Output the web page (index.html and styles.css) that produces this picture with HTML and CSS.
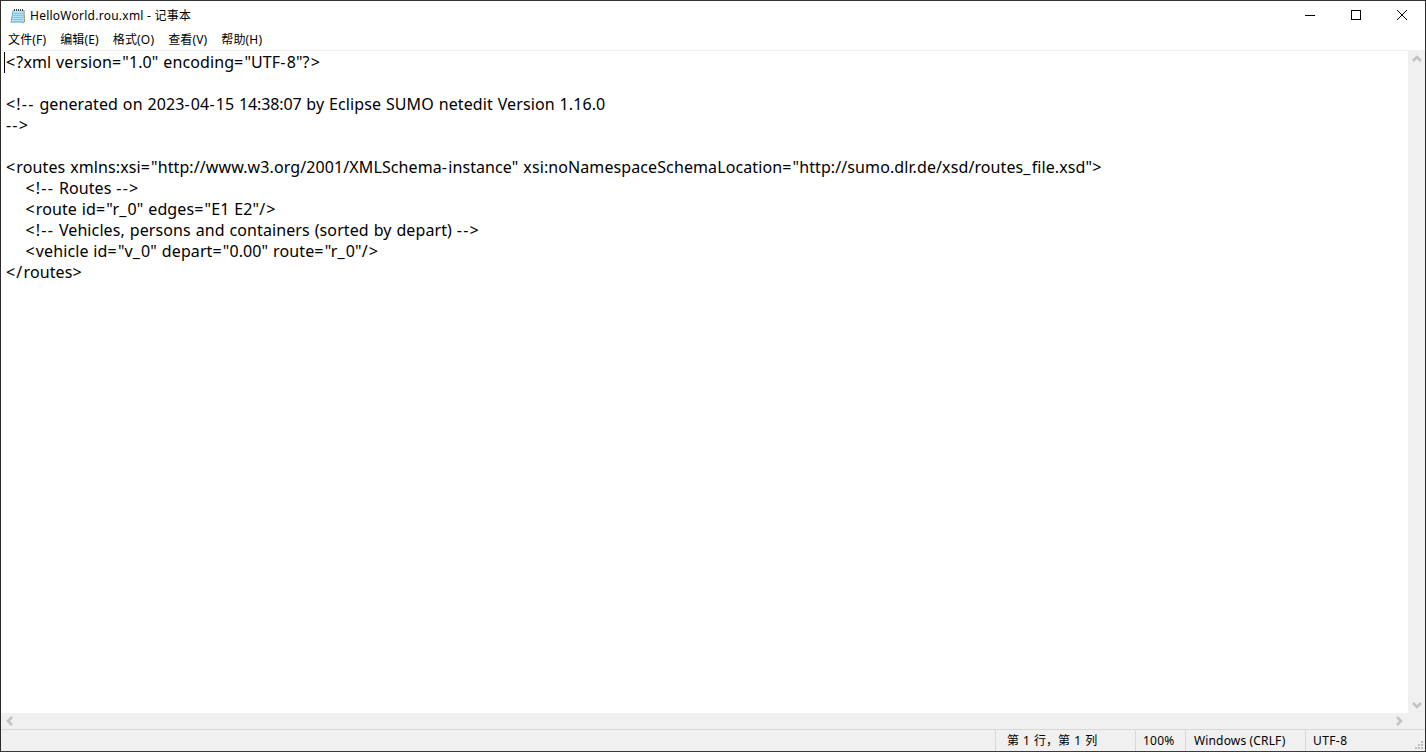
FILE: index.html
```html
<!DOCTYPE html>
<html lang="zh">
<head>
<meta charset="utf-8">
<title>HelloWorld.rou.xml - 记事本</title>
<link rel="stylesheet" href="styles.css">
</head>
<body>
<div class="window">
  <header class="titlebar">
    <svg class="app-icon" width="16" height="16" viewBox="0 0 16 16">
      <path d="M3 2 H14 L14.500 14 L12.500 15 H1 Z" fill="#9fd3ec"/>
      <path d="M3.500 2 H13.500 L13.800 14 H2 Z" fill="#b4e0f3"/>
      <path d="M14 2 L14.500 14 L12.500 15" fill="none" stroke="#a8946a"/>
      <path d="M1 15 L3 2.500" fill="none" stroke="#6fa9c8"/>
      <path d="M3.800 5.500h9M3.500 7.500h9.500M3.300 9.500h9.700M3 11.500h10M2.800 13.500h10" stroke="#86c3e0" fill="none"/>
      <path d="M4 1h1v2h-1zM6 1h1v2h-1zM8 1h1v2h-1zM10 1h1v2h-1zM12 1h1v2h-1z" fill="#3d3d3d"/>
    </svg>
    <span class="title">HelloWorld.rou.xml - 记事本</span>
    <div class="controls">
      <svg class="ctl" width="46" height="30" viewBox="0 0 46 30"><path d="M18 15.500h10" stroke="#000" fill="none"/></svg>
      <svg class="ctl" width="46" height="30" viewBox="0 0 46 30"><rect x="18.500" y="10.500" width="9" height="9" stroke="#000" fill="none"/></svg>
      <svg class="ctl" width="46" height="30" viewBox="0 0 46 30"><path d="M18 10l10 10M28 10l-10 10" stroke="#000" fill="none"/></svg>
    </div>
  </header>
  <nav class="menubar">
    <span class="menu">文件(F)</span>
    <span class="menu">编辑(E)</span>
    <span class="menu">格式(O)</span>
    <span class="menu">查看(V)</span>
    <span class="menu">帮助(H)</span>
  </nav>
  <div class="editor-row">
    <main class="editor">
      <span class="caret"></span>
<pre class="text"><b>&lt;</b>?xml version<b>=</b>"1.0" encoding<b>=</b>"UTF<b>-</b>8"<b>?&gt;</b>

<b>&lt;!--</b> generated on 2023<b>-</b>04<b>-</b>15 <s>14:38:07</s> by Eclipse SUMO netedit Version 1.16.0
<b>--&gt;</b>

<b>&lt;</b>routes xmlns:xsi<b>=</b>"http://www.w3.org/2001/XMLSchema<b>-</b>instance" xsi:noNamespaceSchemaLocation<b>=</b>"http://sumo.dlr.de/xsd/routes<b>_</b>file.xsd"<b>&gt;</b>
    <b>&lt;!--</b> Routes <b>--&gt;</b>
    <b>&lt;</b>route id<b>=</b>"r<b>_</b>0" edges<b>=</b>"E1 E2"<b>/&gt;</b>
    <b>&lt;!--</b> Vehicles, persons and containers (sorted by depart) <b>--&gt;</b>
    <b>&lt;</b>vehicle id<b>=</b>"v<b>_</b>0" depart<b>=</b>"0.00" route<b>=</b>"r<b>_</b>0"<b>/&gt;</b>
<b>&lt;/</b>routes<b>&gt;</b></pre>
    </main>
    <div class="vscroll">
      <svg width="16" height="16" viewBox="0 0 16 16"><path d="M4 10 L8 6 L12 10" class="arrow"/></svg>
      <svg width="16" height="16" viewBox="0 0 16 16"><path d="M4 6 L8 10 L12 6" class="arrow"/></svg>
    </div>
  </div>
  <div class="hscroll">
    <svg width="17" height="16" viewBox="0 0 17 16"><path d="M11 4 L7 8 L11 12" class="arrow"/></svg>
    <svg width="17" height="16" viewBox="0 0 17 16"><path d="M6 4 L10 8 L6 12" class="arrow"/></svg>
    <span class="corner"></span>
  </div>
  <footer class="statusbar">
    <span class="cell cell-pos">第 1 行，第 1 列</span>
    <span class="cell cell-zoom">100%</span>
    <span class="cell cell-eol">Windows (CRLF)</span>
    <span class="cell cell-enc">UTF-8</span>
    <svg class="grip" width="10" height="10" viewBox="0 0 10 10"><path d="M6 0h2v2h-2zM3 3h2v2h-2zM6 3h2v2h-2zM0 6h2v2h-2zM3 6h2v2h-2zM6 6h2v2h-2z" fill="#bdbdbd"/></svg>
  </footer>
</div>
</body>
</html>
```

FILE: styles.css
```css
* { box-sizing: border-box; }
html, body { margin: 0; height: 100%; overflow: hidden; }
body { font-family: "Noto Sans", "Noto Sans CJK SC", sans-serif; color: #000; background: #fff; }
.window {
  width: 1426px; height: 752px; display: flex; flex-direction: column;
  border: 1px solid #2b2b2b; border-bottom-color: #3a3a3a; border-top-color: #333;
  background: #fff;
}
.titlebar { height: 29px; flex: none; display: flex; align-items: center; padding-left: 9px; }
.app-icon { flex: none; }
.title { font-size: 12px; margin-left: 4px; line-height: 16px; letter-spacing: 0.25px; }
.controls { margin-left: auto; display: flex; margin-top: -1px; }
.ctl { display: block; }
.menubar { height: 20px; flex: none; display: flex; align-items: center; padding-left: 7px; gap: 14px; font-size: 12px; letter-spacing: 0.15px; }
.menu { line-height: 16px; }
.editor-row { flex: 1; display: flex; min-height: 0; border-top: 1px solid #f0f0f0; }
.editor { flex: 1; position: relative; padding: 1px 0 0 5px; overflow: hidden; }
.caret { position: absolute; left: 3px; top: 1px; width: 1px; height: 21px; background: #000; }
.text { margin: 0; font: 16px/21px "Noto Sans", "Noto Sans CJK SC", sans-serif; white-space: pre; letter-spacing: 0.1px; word-spacing: 0.6px; }
.text b { font-weight: 400; letter-spacing: 1.2px; }
.text s { text-decoration: none; letter-spacing: -0.15px; }
.vscroll { width: 17px; flex: none; background: #f0f0f0; display: flex; flex-direction: column; justify-content: space-between; padding-left: 1px; }
.vscroll svg, .hscroll svg { display: block; flex: none; }
.arrow { fill: none; stroke: #c2c2c2; stroke-width: 2.500; }
.hscroll { height: 17px; flex: none; background: #f0f0f0; display: flex; justify-content: space-between; border-bottom: 1px solid #d7d7d7; padding-right: 17px; position: relative; }
.corner { position: absolute; right: 0; top: 0; width: 17px; height: 16px; background: #f0f0f0; }
.statusbar { height: 21px; flex: none; background: #f0f0f0; display: flex; font-size: 12px; position: relative; padding-left: 994px; }
.cell { border-left: 1px solid #d7d7d7; display: flex; align-items: center; padding-left: 12px; line-height: 16px; white-space: pre; }
.cell-pos { width: 140px; padding-left: 11px; word-spacing: 1px; }
.cell-zoom { width: 50px; padding-left: 7px; letter-spacing: 0.2px; }
.cell-eol { width: 120px; padding-left: 8px; letter-spacing: 0.15px; }
.cell-enc { padding-left: 7px; flex: 1; letter-spacing: 0.4px; }
.grip { position: absolute; right: 0; bottom: 0; }
```
